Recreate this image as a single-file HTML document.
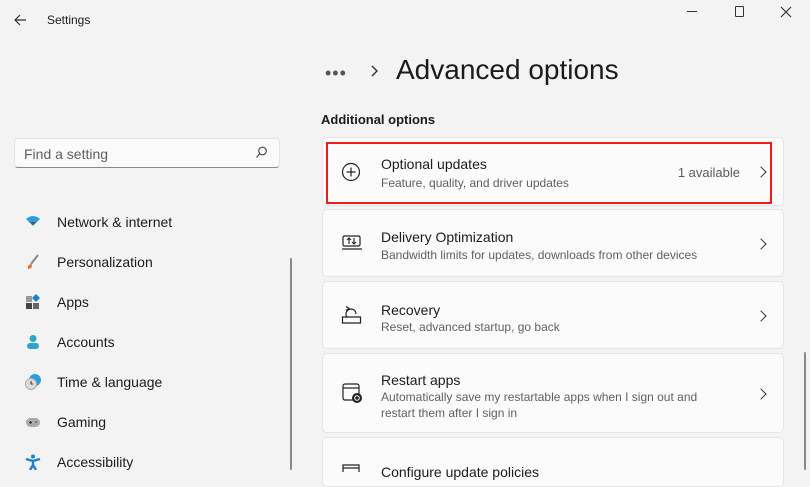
<!DOCTYPE html>
<html><head><meta charset="utf-8"><style>
*{margin:0;padding:0;box-sizing:border-box}
body{width:810px;height:470px;overflow:hidden;background:#f3f3f3;font-family:"Liberation Sans",sans-serif;color:#1b1b1b;position:relative}
.a{position:absolute}
.nav{position:absolute;left:57px;font-size:14px;color:#1b1b1b}
.ic{position:absolute;left:25px;width:16px;height:16px}
.card{position:absolute;left:322px;width:462px;background:#fbfbfb;border:1px solid #e5e5e5;border-radius:5px}
.t{position:absolute;left:58px;font-size:14px;color:#1b1b1b}
.s{position:absolute;left:58px;font-size:12px;color:#606060;line-height:16px}
.chev{position:absolute;right:18px;width:8px;height:8px;border-right:1.4px solid #333;border-top:1.4px solid #333;transform:rotate(45deg)}
</style></head><body>
<svg class="a" style="left:12px;top:12px" width="16" height="16"><path d="M14 8H3M8 3L3 8l5 5" stroke="#333" stroke-width="1.2" fill="none"/></svg>
<div class="a" style="left:47px;top:13px;font-size:12px">Settings</div>
<div class="a" style="left:687px;top:11px;width:10px;height:1px;background:#333"></div>
<div class="a" style="left:735px;top:6px;width:9px;height:11px;border:1.2px solid #333;border-radius:1px"></div>
<svg class="a" style="left:780px;top:6px" width="12" height="12"><path d="M1 1L11 11M11 1L1 11" stroke="#333" stroke-width="1.2"/></svg>
<div class="a" style="left:325px;top:63px;font-size:18px;letter-spacing:1px;color:#555">•••</div>
<svg class="a" style="left:370px;top:64px" width="10" height="14"><path d="M2 2l5 5-5 5" stroke="#333" stroke-width="1.4" fill="none"/></svg>
<div class="a" style="left:396px;top:54px;font-size:28px;color:#1b1b1b">Advanced options</div>
<div class="a" style="left:321px;top:112px;font-size:13px;font-weight:bold;color:#1b1b1b">Additional options</div>
<div class="a" style="left:14px;top:138px;width:266px;height:30px;background:#fbfbfb;border:1px solid #e3e3e3;border-bottom:1px solid #8a8a8a;border-radius:4px"></div>
<div class="a" style="left:24px;top:146px;font-size:14px;color:#5e5e5e">Find a setting</div>
<svg class="a" style="left:255px;top:146px" width="12" height="13"><circle cx="7.5" cy="5" r="3.8" stroke="#444" fill="none" stroke-width="1.1"/><path d="M4.8 7.8L1.5 11.5" stroke="#444" stroke-width="1.1"/></svg>
<svg class="ic" style="top:214px" viewBox="0 0 16 16"><path d="M1 5Q8-1 15 5L8 12Z" fill="#2aa0d8"/><path d="M5 8h6l-3 3z" fill="#555"/></svg>
<div class="nav" style="top:214px">Network &amp; internet</div>
<svg class="ic" style="top:254px" viewBox="0 0 16 16"><path d="M13 1L6 10" stroke="#888" stroke-width="2"/><path d="M6 10Q2 11 3 15Q7 15 7 11Z" fill="#e8733a"/></svg>
<div class="nav" style="top:254px">Personalization</div>
<svg class="ic" style="top:294px" viewBox="0 0 16 16"><rect x="1" y="2" width="6" height="6" fill="#999"/><rect x="1" y="9" width="6" height="6" fill="#444"/><rect x="8" y="9" width="6" height="6" fill="#666"/><path d="M11 0l4 4-4 4-4-4z" fill="#1e7fd0"/></svg>
<div class="nav" style="top:294px">Apps</div>
<svg class="ic" style="top:334px" viewBox="0 0 16 16"><circle cx="8" cy="4.5" r="3.5" fill="#2aa6c9"/><rect x="2" y="9" width="12" height="6" rx="3" fill="#2aa6c9"/></svg>
<div class="nav" style="top:334px">Accounts</div>
<svg class="ic" style="top:374px" viewBox="0 0 16 16"><circle cx="10" cy="6" r="6" fill="#2aa0d8"/><circle cx="6" cy="10" r="5.5" fill="#ddd" stroke="#aaa"/><path d="M6 7v3h2" stroke="#333" fill="none"/></svg>
<div class="nav" style="top:374px">Time &amp; language</div>
<svg class="ic" style="top:414px" viewBox="0 0 16 16"><rect x="1" y="4" width="14" height="9" rx="4.5" fill="#aaa"/><path d="M4 8.5h3M5.5 7v3" stroke="#333"/><circle cx="11" cy="8" r="1" fill="#1e7fd0"/></svg>
<div class="nav" style="top:414px">Gaming</div>
<svg class="ic" style="top:454px" viewBox="0 0 16 16"><circle cx="8" cy="2.5" r="2" fill="#1e7fd0"/><path d="M1 5l7 2 7-2M8 7v4l-3 5M8 11l3 5" stroke="#1e7fd0" stroke-width="2.4" fill="none"/></svg>
<div class="nav" style="top:454px">Accessibility</div>
<div class="a" style="left:290px;top:258px;width:2px;height:212px;background:#8a8a8a;border-radius:1px"></div>
<div class="a" style="left:804px;top:352px;width:2px;height:118px;background:#8a8a8a;border-radius:1px"></div>

<div class="card" style="top:137px;height:69px">
 <svg class="a" style="left:18px;top:24px" width="20" height="20"><circle cx="10" cy="10" r="8.5" stroke="#222" stroke-width="1.2" fill="none"/><path d="M10 5.5v9M5.5 10h9" stroke="#222" stroke-width="1.2"/></svg>
 <div class="t" style="top:18px">Optional updates</div>
 <div class="s" style="top:37px">Feature, quality, and driver updates</div>
 <div class="a" style="right:43px;top:27px;font-size:13px;color:#5a5a5a">1 available</div>
 <div class="chev" style="top:30px"></div>
</div>
<div class="a" style="left:326px;top:142px;width:446px;height:62px;border:2.5px solid #f01c1c"></div>
<div class="card" style="top:209px;height:68px">
 <svg class="a" style="left:18px;top:24px" width="22" height="18"><rect x="2" y="2" width="17" height="10" rx="1.5" stroke="#222" stroke-width="1.2" fill="none"/><path d="M1 15h20" stroke="#222" stroke-width="1.2"/><path d="M8 10V4M6 6l2-2 2 2M13 4v6M11 8l2 2 2-2" stroke="#222" stroke-width="1.1" fill="none"/></svg>
 <div class="t" style="top:19px">Delivery Optimization</div>
 <div class="s" style="top:37px">Bandwidth limits for updates, downloads from other devices</div>
 <div class="chev" style="top:30px"></div>
</div>
<div class="card" style="top:281px;height:68px">
 <svg class="a" style="left:18px;top:22px" width="22" height="22"><path d="M1.5 13h18v6h-18zM6 13a5 5 0 1 1 9-3" stroke="#222" stroke-width="1.2" fill="none"/><path d="M5 2.5l3 2-3 2" stroke="#222" stroke-width="1.2" fill="none"/></svg>
 <div class="t" style="top:20px">Recovery</div>
 <div class="s" style="top:37px">Reset, advanced startup, go back</div>
 <div class="chev" style="top:30px"></div>
</div>
<div class="card" style="top:353px;height:80px">
 <svg class="a" style="left:19px;top:29px" width="22" height="22"><rect x="1" y="1" width="16" height="16" rx="2" stroke="#222" stroke-width="1.2" fill="none"/><path d="M1 5h16" stroke="#222" stroke-width="1.2"/><circle cx="15" cy="15" r="5" fill="#222"/><circle cx="15" cy="15" r="2.3" stroke="#fff" stroke-width="1" fill="none"/></svg>
 <div class="t" style="top:18px">Restart apps</div>
 <div class="s" style="top:35px">Automatically save my restartable apps when I sign out and<br>restart them after I sign in</div>
 <div class="chev" style="top:36px"></div>
</div>
<div class="card" style="top:437px;height:50px">
 <svg class="a" style="left:19px;top:25px" width="20" height="10"><path d="M1 9V2h16v7M1 5h16" stroke="#222" stroke-width="1.2" fill="none"/></svg>
 <div class="t" style="top:26px">Configure update policies</div>
</div>
</body></html>
